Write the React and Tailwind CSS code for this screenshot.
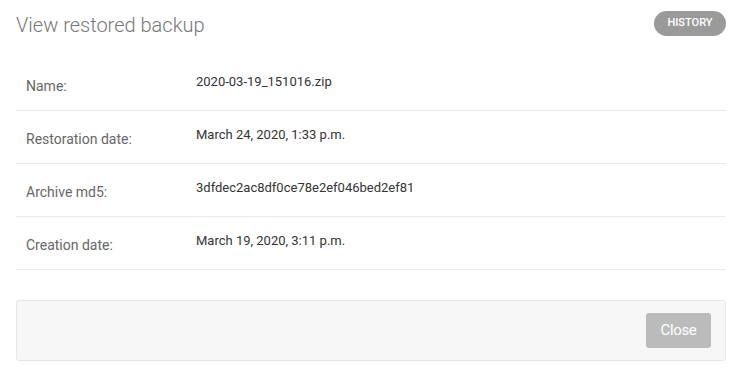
import React from "react";

const rows = [
  { label: "Name:", value: "2020-03-19_151016.zip" },
  { label: "Restoration date:", value: "March 24, 2020, 1:33 p.m." },
  { label: "Archive md5:", value: "3dfdec2ac8df0ce78e2ef046bed2ef81" },
  { label: "Creation date:", value: "March 19, 2020, 3:11 p.m." },
];

function DetailRow({ label, value }) {
  return (
    <div className="flex h-[53px] items-start border-b border-[#e9e9e9]">
      <div className="w-[180px] pl-[10px] pt-[18px] text-[14px] leading-5 text-[#666]">
        {label}
      </div>
      <div className="pt-[15px] text-[13px] leading-[18px] text-[#333]">{value}</div>
    </div>
  );
}

export default function App() {
  return (
    <div className="min-h-screen bg-white px-4 font-['Roboto',sans-serif]">
      <div className="flex items-start justify-between pt-[11px]">
        <h1 className="text-[20px] font-light leading-7 text-[#777]">View restored backup</h1>
        <button className="flex h-[25px] w-[72px] items-center justify-center rounded-full bg-[#9a9a9a] text-[11px] font-medium uppercase text-white">
          History
        </button>
      </div>

      <div className="mt-[19px]">
        {rows.map((row, i) => (
          <DetailRow key={i} label={row.label} value={row.value} />
        ))}
      </div>

      <div className="mt-[30px] flex justify-end rounded-[3px] border border-[#e6e6e6] bg-[#f7f7f7] px-[14px] py-[12px]">
        <button className="h-[35px] w-[65px] rounded-[3px] bg-[#bbbbbb] text-[15px] tracking-tight text-white">
          Close
        </button>
      </div>
    </div>
  );
}
